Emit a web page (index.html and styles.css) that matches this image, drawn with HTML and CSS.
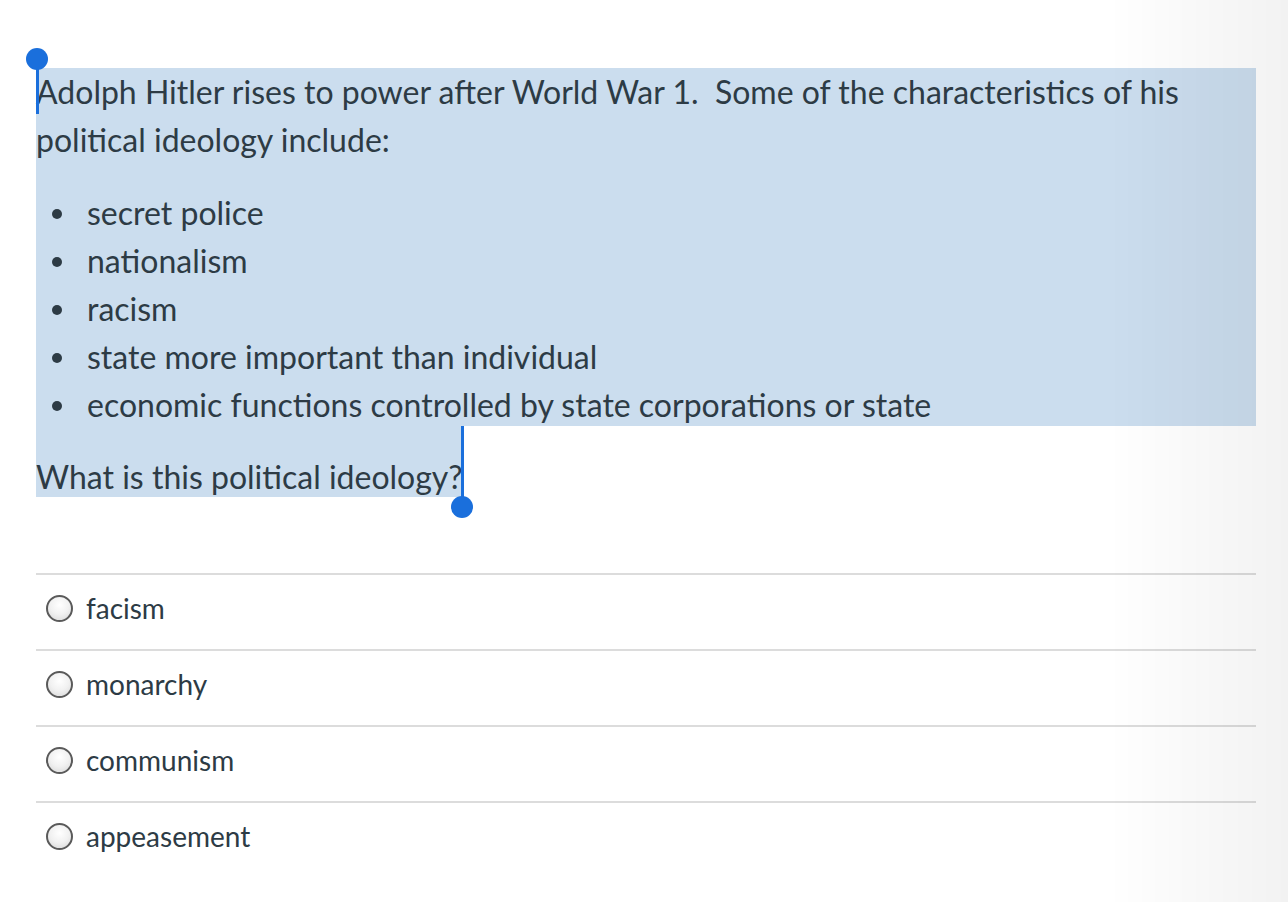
FILE: index.html
```html
<!DOCTYPE html>
<html lang="en">
<head>
<meta charset="utf-8">
<link rel="stylesheet" href="styles.css">
<title>Quiz question</title>
</head>
<body>
<main class="question">
  <div class="stem">
    <div class="sel-block">
      <p class="intro">Adolph Hitler rises to power after World War 1.&nbsp; Some of the characteristics of his political ideology include:</p>
      <ul class="traits">
        <li>secret police</li>
        <li>nationalism</li>
        <li>racism</li>
        <li>state more important than individual</li>
        <li>economic functions controlled by state corporations or state</li>
      </ul>
    </div>
    <p class="ask"><span class="ask-text">What is this political ideology?</span></p>
    <span class="handle handle-start"></span>
    <span class="handle handle-end"></span>
  </div>
  <div class="answers">
    <label class="answer"><span class="radio"></span><span class="label">facism</span></label>
    <label class="answer"><span class="radio"></span><span class="label">monarchy</span></label>
    <label class="answer"><span class="radio"></span><span class="label">communism</span></label>
    <label class="answer"><span class="radio"></span><span class="label">appeasement</span></label>
  </div>
</main>
<div class="edge-shade"></div>
</body>
</html>
```

FILE: styles.css
```css
html, body {
  margin: 0;
  padding: 0;
}
body {
  background: #ffffff;
  font-family: Lato, "Open Sans", sans-serif;
  color: #2d3b45;
  font-size: 32px;
  line-height: 48px;
  width: 1288px;
  height: 902px;
  overflow: hidden;
}
.question {
  padding: 68px 0 0 36px;
  width: 1220px;
}
.stem {
  position: relative;
}
.sel-block {
  background: #cbddee;
}
.intro {
  margin: 0;
  padding-bottom: 25px;
}
.traits {
  margin: 0;
  padding: 0 0 0 51px;
  list-style: none;
}
.traits li {
  position: relative;
  line-height: 48px;
}
.traits li::before {
  content: "";
  position: absolute;
  left: -35px;
  top: 20px;
  width: 10px;
  height: 10px;
  border-radius: 50%;
  background: #2d3b45;
}
.traits li:last-child {
  height: 45px;
}
.ask {
  margin: 0;
  display: inline-block;
  background: #cbddee;
  padding-top: 26px;
  height: 45px;
  line-height: 50px;
  padding-right: 1px;
}
.handle {
  position: absolute;
  width: 3px;
  background: #1a6fdc;
}
.handle::after {
  content: "";
  position: absolute;
  width: 22px;
  height: 22px;
  border-radius: 50%;
  background: #1a6fdc;
  left: -10px;
}
.handle-start {
  left: 0;
  top: -9px;
  height: 55px;
}
.handle-start::after {
  top: -11px;
}
.handle-end {
  left: 425px;
  top: 358px;
  height: 76px;
}
.handle-end::after {
  bottom: -16px;
}
.answers {
  margin-top: 72px;
}
.answer {
  display: flex;
  align-items: center;
  height: 66px;
  padding-bottom: 8px;
  border-top: 2px solid #dcdcdc;
  gap: 13px;
  padding-left: 10px;
}
.radio {
  width: 23px;
  height: 23px;
  border: 2px solid #5a5a5a;
  border-radius: 50%;
  background: radial-gradient(circle at 50% 35%, #ffffff 0%, #f1f1f1 50%, #d6d6d6 100%);
  flex: none;
}
.label {
  font-size: 28px;
  line-height: 48px;
}
.edge-shade {
  position: fixed;
  top: 0;
  right: 0;
  width: 180px;
  height: 902px;
  pointer-events: none;
  background: linear-gradient(to right, rgba(0,0,0,0) 0%, rgba(0,0,0,0.03) 60%, rgba(0,0,0,0.05) 100%);
}
```
